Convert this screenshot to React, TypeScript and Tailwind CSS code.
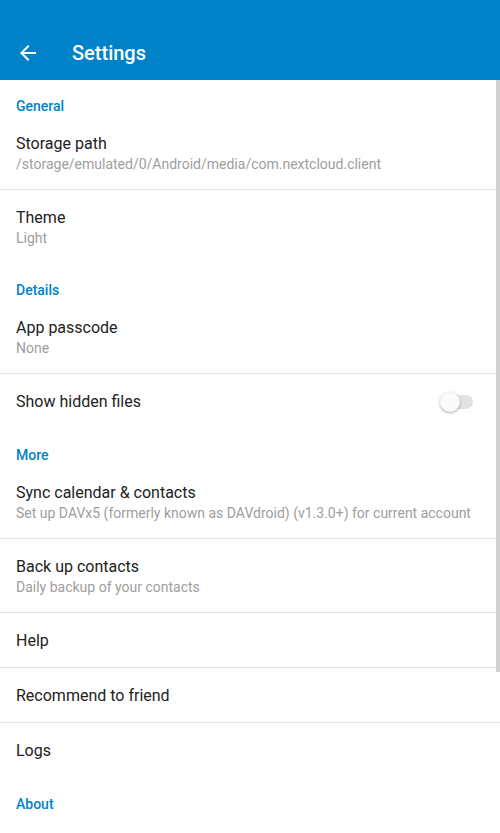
import React from 'react';

type Item = {
  title: string;
  summary?: string;
  divider?: boolean;
  toggle?: boolean;
};

type Section = {
  name: string;
  items: Item[];
};

const sections: Section[] = [
  {
    name: 'General',
    items: [
      { title: 'Storage path', summary: '/storage/emulated/0/Android/media/com.nextcloud.client', divider: true },
      { title: 'Theme', summary: 'Light' },
    ],
  },
  {
    name: 'Details',
    items: [
      { title: 'App passcode', summary: 'None', divider: true },
      { title: 'Show hidden files', toggle: true },
    ],
  },
  {
    name: 'More',
    items: [
      { title: 'Sync calendar & contacts', summary: 'Set up DAVx5 (formerly known as DAVdroid) (v1.3.0+) for current account', divider: true },
      { title: 'Back up contacts', summary: 'Daily backup of your contacts', divider: true },
      { title: 'Help', divider: true },
      { title: 'Recommend to friend', divider: true },
      { title: 'Logs' },
    ],
  },
  {
    name: 'About',
    items: [],
  },
];

function Toggle() {
  return (
    <div className="relative w-[33px] h-[20px] mr-[11px] shrink-0">
      <div className="absolute left-[2px] right-0 top-[3px] h-[14px] rounded-full bg-[#e3e3e3]" />
      <div className="absolute left-0 top-0 w-[20px] h-[20px] rounded-full bg-[#fafafa] shadow-[0_1px_3px_rgba(0,0,0,0.35)]" />
    </div>
  );
}

function Row({ item }: { item: Item }) {
  const border = item.divider ? 'border-b border-[#e2e2e2]' : '';
  if (item.summary) {
    return (
      <div className={`h-[74px] px-4 pt-[18px] ${border}`}>
        <div className="text-[16px] leading-[20px] text-[#222222]">{item.title}</div>
        <div className="mt-[1px] text-[14px] leading-[18px] text-[#9e9e9e] whitespace-nowrap">{item.summary}</div>
      </div>
    );
  }
  return (
    <div className={`h-[55px] px-4 pt-[1px] flex items-center justify-between ${border}`}>
      <span className="text-[16px] leading-[20px] text-[#222222]">{item.title}</span>
      {item.toggle && <Toggle />}
    </div>
  );
}

export default function App() {
  return (
    <div className="relative h-[833px] overflow-hidden bg-white" style={{ fontFamily: 'Roboto, "Noto Sans", sans-serif' }}>
      {/* Toolbar */}
      <div className="h-[80px] bg-[#0082c9] flex items-end pb-[14px]">
        <div className="w-[72px] flex justify-start pl-4 pb-[1px]">
          <svg width="24" height="24" viewBox="0 0 24 24" fill="white">
            <path d="M20 11H7.83l5.59-5.59L12 4l-8 8 8 8 1.41-1.41L7.83 13H20v-2z" />
          </svg>
        </div>
        <span className="text-white text-[20px] leading-[26px] font-medium">Settings</span>
      </div>

      {/* Preferences */}
      <div>
        {sections.map((section) => (
          <div key={section.name}>
            <div className="h-[36px] pt-[17px] px-4 text-[14px] leading-[18px] font-medium text-[#0082c9]">
              {section.name}
            </div>
            {section.items.map((item) => (
              <Row key={item.title} item={item} />
            ))}
          </div>
        ))}
      </div>

      {/* Scrollbar */}
      <div className="absolute right-0 top-[80px] w-[4px] h-[592px] bg-[#d0d0d0]" />
    </div>
  );
}
